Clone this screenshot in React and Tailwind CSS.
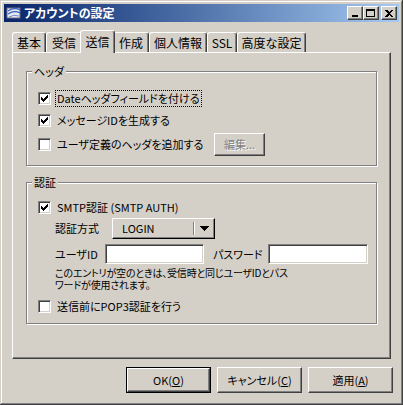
import React from "react";

const raised =
  "border border-t-white border-l-white border-r-[#404040] border-b-[#404040] shadow-[inset_-1px_-1px_#808080]";
const sunken =
  "border border-t-[#808080] border-l-[#808080] border-r-white border-b-white shadow-[inset_1px_1px_#404040,inset_-1px_-1px_#d4d0c8]";
const etched = "border border-[#808080] shadow-[inset_1px_1px_#fff,1px_1px_#fff]";

const tabs = [
  { label: "基本", w: "w-[34px]" },
  { label: "受信", w: "w-[36px]" },
  { label: "送信", w: "w-[35px]", active: true },
  { label: "作成", w: "w-[36px]" },
  { label: "個人情報", w: "w-[58px]" },
  { label: "SSL", w: "w-[30px]" },
  { label: "高度な設定", w: "w-[69px]" },
];

function Check({ checked }) {
  return (
    <span className={`w-[13px] h-[13px] bg-white flex items-center justify-center shrink-0 ${sunken}`}>
      {checked && (
        <svg width="7" height="7" viewBox="0 0 7 7" shapeRendering="crispEdges">
          <path d="M0 2 L2 4 L7 -1 L7 2 L2 7 L0 5 Z" fill="black" />
        </svg>
      )}
    </span>
  );
}

function CheckRow({ checked, focused, children }) {
  return (
    <div className="flex items-center h-[19px]">
      <Check checked={checked} />
      <span
        className={`ml-[4px] px-[1px] leading-[15px] whitespace-nowrap border border-dotted ${
          focused ? "border-black" : "border-transparent"
        }`}
      >
        {children}
      </span>
    </div>
  );
}

function TitleButton({ children, className = "" }) {
  return (
    <div className={`w-[16px] h-[14px] bg-[#d4d0c8] flex items-center justify-center ${raised} ${className}`}>
      {children}
    </div>
  );
}

function Group({ label, className, children }) {
  return (
    <div className={`relative ${etched} ${className}`}>
      <span className="absolute left-[5px] -top-[8px] px-[2px] bg-[#d4d0c8] leading-[14px]">{label}</span>
      {children}
    </div>
  );
}

function Button({ children, isDefault }) {
  return (
    <div className={`w-[85px] h-[26px] ${isDefault ? "border border-black" : ""}`}>
      <div className={`w-full h-full flex items-center justify-center ${raised}`}>{children}</div>
    </div>
  );
}

export default function App() {
  return (
    <div
      className="w-[403px] h-[405px] bg-[#d4d0c8] p-[4px] text-[11px] text-black font-['Noto_Sans_CJK_JP','Noto_Sans',sans-serif] [font-feature-settings:'palt'] shadow-[inset_-1px_-1px_#404040,inset_1px_1px_#d4d0c8,inset_-2px_-2px_#808080,inset_2px_2px_#fff]"
    >
      {/* title bar */}
      <div className="h-[18px] flex items-center bg-linear-to-r from-[#0a246a] to-[#a6caf0] pl-[2px] pr-[2px]">
        <svg width="16" height="16" viewBox="0 0 16 16" className="shrink-0">
          <rect x="1" y="3" width="13" height="10" fill="#e8e8f0" stroke="#6b6b80" />
          <path d="M2 6 Q8 2 14 5" stroke="#3060c0" fill="none" strokeWidth="1.2" />
          <path d="M2 9 Q8 5 14 8" stroke="#3060c0" fill="none" strokeWidth="1.2" />
          <path d="M3 12 Q8 9 13 11" stroke="#7090d0" fill="none" />
        </svg>
        <span className="ml-[2px] text-white font-bold text-[12px] leading-[18px]">アカウントの設定</span>
        <div className="ml-auto flex items-center">
          <TitleButton>
            <span className="w-[6px] h-[2px] bg-black mt-[6px] -ml-[1px]" />
          </TitleButton>
          <TitleButton>
            <span className="w-[9px] h-[8px] border border-black border-t-2 -ml-[1px]" />
          </TitleButton>
          <TitleButton className="ml-[2px]">
            <svg width="8" height="7" viewBox="0 0 8 7" shapeRendering="crispEdges" className="-ml-[1px]">
              <path d="M0 0h2l2 2 2-2h2L5 3.5 8 7H6L4 5 2 7H0L3 3.5Z" fill="black" />
            </svg>
          </TitleButton>
        </div>
      </div>

      {/* tabs */}
      <div className="mt-[8px] ml-[8px] flex items-end h-[22px] text-[12px]">
        {tabs.map((t) =>
          t.active ? (
            <div
              key={t.label}
              className={`${t.w} h-[23px] -mb-[1px] -mx-[2px] relative z-10 bg-[#d4d0c8] rounded-t-[3px] border-t border-l border-r border-t-white border-l-white border-r-[#404040] shadow-[inset_-1px_0_#808080] flex items-start justify-center pt-[3px] leading-[15px]`}
            >
              {t.label}
            </div>
          ) : (
            <div
              key={t.label}
              className={`${t.w} h-[20px] rounded-t-[3px] border-t border-l border-r border-t-white border-l-white border-r-[#404040] shadow-[inset_-1px_0_#808080] flex items-center justify-center leading-[15px]`}
            >
              {t.label}
            </div>
          )
        )}
      </div>

      {/* panel */}
      <div className="ml-[8px] w-[379px] h-[307px] border border-t-white border-l-white border-r-[#404040] border-b-[#404040] shadow-[inset_-1px_-1px_#808080] pl-[13px] pt-[18px]">
        <Group label="ヘッダ" className="w-[351px] h-[95px] pl-[11px] pt-[17px]">
          <div className="flex flex-col gap-[3px]">
            <CheckRow checked focused>Dateヘッダフィールドを付ける</CheckRow>
            <CheckRow checked>メッセージIDを生成する</CheckRow>
            <div className="flex items-center h-[23px]">
              <div className="w-[176px]">
                <CheckRow>ユーザ定義のヘッダを追加する</CheckRow>
              </div>
              <div className={`w-[51px] h-[23px] flex items-center justify-center text-[#808080] [text-shadow:1px_1px_#fff] ${raised}`}>
                編集...
              </div>
            </div>
          </div>
        </Group>

        <Group label="認証" className="mt-[16px] w-[351px] h-[142px] pl-[11px] pt-[15px]">
          <CheckRow checked>SMTP認証 (SMTP AUTH)</CheckRow>
          <div className="ml-[17px]">
            <div className="flex items-center h-[21px] mt-[1px]">
              <span className="w-[57px]">認証方式</span>
              <div className={`w-[103px] h-[21px] flex items-center ${raised} border-r-black border-b-black`}>
                <span className="pl-[9px] flex-1">LOGIN</span>
                <span className="w-[2px] h-[13px] border-l border-[#808080] bg-white" />
                <span className="w-[19px] flex justify-center">
                  <svg width="9" height="5" viewBox="0 0 9 5" shapeRendering="crispEdges">
                    <path d="M0 0h9L4.5 5Z" fill="black" />
                  </svg>
                </span>
              </div>
            </div>
            <div className="flex items-center h-[20px] mt-[5px]">
              <span className="w-[50px]">ユーザID</span>
              <div className={`w-[99px] h-[20px] bg-white ${sunken}`} />
              <span className="ml-[9px] w-[55px]">パスワード</span>
              <div className={`w-[100px] h-[20px] bg-white ${sunken}`} />
            </div>
            <div className="mt-[3px] text-[10px] leading-[12px] tracking-[-0.2px]">
              <div className="h-[12px]">このエントリが空のときは、受信時と同じユーザIDとパス</div>
              <div className="h-[12px]">ワードが使用されます。</div>
            </div>
          </div>
          <div className="mt-[6px]">
            <CheckRow>送信前にPOP3認証を行う</CheckRow>
          </div>
        </Group>
      </div>

      {/* buttons */}
      <div className="mt-[8px] ml-[122px] flex gap-[6px]">
        <Button isDefault>
          OK(<span className="underline">O</span>)
        </Button>
        <Button>
          キャンセル(<span className="underline">C</span>)
        </Button>
        <Button>
          適用(<span className="underline">A</span>)
        </Button>
      </div>
    </div>
  );
}
